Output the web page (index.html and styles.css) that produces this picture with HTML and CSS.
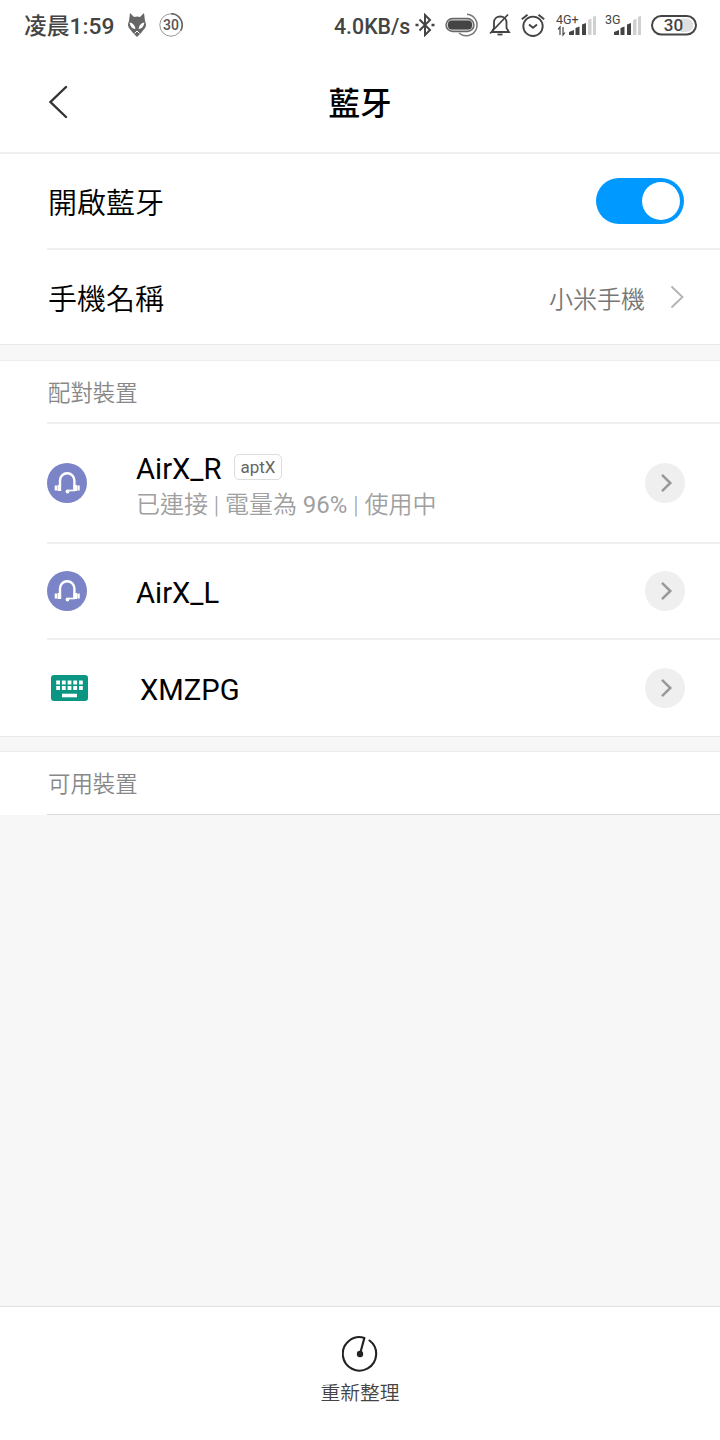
FILE: index.html
```
<!DOCTYPE html>
<html lang="zh-Hant">
  <head>
    <meta charset="UTF-8" />
    <meta name="viewport" content="width=device-width, initial-scale=1.0" />
    <title>藍牙</title>
    <link rel="stylesheet" href="styles.css">
  </head>

  <body>
    <!-- Shared shapes -->
    <svg class="defs" width="0" height="0">
      <symbol id="headset" viewBox="0 0 40 40">
        <circle cx="20" cy="20" r="20" fill="#7b84c6" />
        <path d="M13 28V17.500a7.200 7.200 0 0 1 14.400 0V28" fill="none" stroke="#fff" stroke-width="2.400" />
        <path d="M28 27.500h-7" fill="none" stroke="#fff" stroke-width="1.600" />
        <path d="M10.500 22h3.500v6h-3.500zM26.500 22h3.500v6h-3.500z" fill="#fff" />
        <path d="M8.900 22.500v5M31.500 22.500v5" stroke="#fff" stroke-width="2.400" />
        <circle cx="20.500" cy="28.500" r="1.900" fill="#fff" />
      </symbol>
      <symbol id="more" viewBox="0 0 40 40">
        <circle cx="20" cy="20" r="20" fill="#efefef" />
        <path d="M17 11.800l8.300 8.200-8.300 8.200" fill="none" stroke="#999" stroke-width="2.500" />
      </symbol>
    </svg>

    <!-- Status bar -->
    <div class="status-bar">
      <span class="time">凌晨1:59</span>
      <svg class="fox" width="20" height="24" viewBox="0 0 20 24">
        <path d="M3 0l4 4q3-1 6 0l4-4 1 8q2 4 0 7l-4 5-4 4-4-4-4-5q-2-3 0-7z" fill="#666" />
        <path d="M2.500 9.500q5 .5 6 6.500-5-.5-6-6.500zM17.500 9.500q-5 .5-6 6.500 5-.5 6-6.500z" fill="#fff" />
        <path d="M7.500 20.500l2.500-2.500 2.500 2.500" fill="none" stroke="#fff" stroke-width="1" />
      </svg>
      <svg class="ring" width="24" height="24" viewBox="0 0 24 24">
        <circle cx="12" cy="12" r="11.200" fill="none" stroke="#999" stroke-width="1" />
        <path d="M12 .8a11.200 11.200 0 0 1 9.700 16.800" fill="none" stroke="#666" stroke-width="1.600" />
        <text x="12" y="17.200" class="ring-text">30</text>
      </svg>
      <span class="speed">4.0KB/s</span>
      <svg class="bluetooth" width="20" height="24" viewBox="0 0 20 24" fill="none" stroke="#444" stroke-width="2">
        <path d="M4.500 6.500L15 17l-5 5V2l5 5L4.500 17.500" />
        <path d="M.5 12h3M16.500 12h3" stroke-width="2.600" />
      </svg>
      <svg class="headset-battery" width="34" height="24" viewBox="0 0 34 24" fill="none">
        <path d="M22 1.200a10.800 10.800 0 1 1-8 18.800" stroke="#777" stroke-width="1.500" />
        <rect x="1" y="5.500" width="28" height="13" rx="6.500" fill="#ccc" stroke="#666" stroke-width="1.400" />
        <rect x="3" y="7.500" width="24" height="9" rx="4" fill="#444" />
      </svg>
      <svg class="bell" width="22" height="24" viewBox="0 0 22 24" fill="none" stroke="#444" stroke-width="1.800">
        <path d="M3 19h17l-2.500-4V9.500C17.500 1.500 5 1.500 5 9.500V15z" />
        <path d="M19 1.500L1 20.500" />
        <path d="M8.500 21.500h5" />
      </svg>
      <svg class="alarm" width="24" height="24" viewBox="0 0 24 24" fill="none" stroke="#444" stroke-width="1.900">
        <circle cx="12" cy="13.300" r="9.700" />
        <path d="M.8 6.300l5.700-4.500M23.200 6.300l-5.700-4.500M8 11.500l4 3.200 4-3.200" />
      </svg>
      <svg class="signal" width="42" height="24" viewBox="0 0 42 24">
        <text x="1" y="10.500" class="network">4G+</text>
        <path d="M5 22v-8l-2 2.500M8 14v8l2-2.500" fill="none" stroke="#444" stroke-width="1.200" />
        <path d="M14 22v-3l5-2v5zM20.500 22v-7l4-1.500V22zM27 22V11.500l4-1.500v12z" fill="#444" />
        <path d="M33 22V7l3.500-1.500V22zM38 22V4l3-1.500V22z" fill="#d0d0d0" />
      </svg>
      <svg class="signal second" width="37" height="24" viewBox="0 0 37 24">
        <text x="0" y="10.500" class="network">3G</text>
        <path d="M9 22v-3l5-2v5zM15.500 22v-7l4-1.500V22zM22 22V11.500l4-1.500v12z" fill="#444" />
        <path d="M28 22V7l3.500-1.500V22zM33 22V4l3-1.500V22z" fill="#d0d0d0" />
      </svg>
      <svg class="battery" width="46" height="24" viewBox="0 0 46 24">
        <rect x="1" y="3" width="44" height="18.500" rx="9.250" fill="#fff" stroke="#444" stroke-width="2" />
        <path d="M30 5.500h5.500a6.500 6.500 0 0 1 0 13.500H30z" fill="#e0e0e0" />
        <text x="22.500" y="18.200" class="battery-text">30</text>
      </svg>
    </div>

    <!-- Title bar -->
    <header>
      <svg class="back" width="20" height="34" viewBox="0 0 20 34">
        <path d="M17 2L1.500 17 17 32" fill="none" stroke="#333" stroke-width="2.400" stroke-linecap="round" />
      </svg>
      <h1>藍牙</h1>
    </header>

    <main>
      <section class="settings">
        <div class="row">
          <span class="label">開啟藍牙</span>
          <div class="switch"></div>
        </div>
        <div class="row">
          <span class="label">手機名稱</span>
          <span class="value">小米手機</span>
          <svg class="chevron" width="14" height="24" viewBox="0 0 14 24">
            <path d="M1.500 1.500L12.500 12 1.500 22.500" fill="none" stroke="#b2b2b2" stroke-width="1.800" />
          </svg>
        </div>
      </section>

      <section class="paired">
        <h2>配對裝置</h2>
        <div class="row device connected">
          <svg class="device-icon" width="40" height="40"><use href="#headset" /></svg>
          <div class="info">
            <div class="name">AirX_R <span class="codec">aptX</span></div>
            <div class="state">已連接 | 電量為 <span class="percent">96%</span> | 使用中</div>
          </div>
          <svg class="more" width="40" height="40"><use href="#more" /></svg>
        </div>
        <div class="row device">
          <svg class="device-icon" width="40" height="40"><use href="#headset" /></svg>
          <div class="info">
            <div class="name">AirX_L</div>
          </div>
          <svg class="more" width="40" height="40"><use href="#more" /></svg>
        </div>
        <div class="row device">
          <svg class="device-icon wide" width="44" height="40" viewBox="0 0 44 40">
            <rect x="4" y="7" width="37" height="26" rx="3" fill="#0a9682" />
            <path d="M9.200 14.500h27M9.200 20h27" stroke="#fff" stroke-width="3.800" stroke-dasharray="3.800 1.900" />
            <path d="M15 27.500h15" stroke="#fff" stroke-width="3.600" />
          </svg>
          <div class="info">
            <div class="name">XMZPG</div>
          </div>
          <svg class="more" width="40" height="40"><use href="#more" /></svg>
        </div>
      </section>

      <section class="available">
        <h2>可用裝置</h2>
      </section>
    </main>

    <!-- Refresh -->
    <footer>
      <svg width="36" height="38" viewBox="1 0 36 38">
        <path d="M28.500 5.500A16.700 16.700 0 1 1 23.400 2.900L19 19" fill="none" stroke="#222" stroke-width="2.100" stroke-linecap="round" stroke-linejoin="round" />
        <circle cx="19" cy="19" r="3.200" fill="#222" />
      </svg>
      <span>重新整理</span>
    </footer>
  </body>
</html>
```
FILE: styles.css
```
/* General Styles */
* {
  box-sizing: border-box;
}

body {
  font-family: Roboto, "Noto Sans CJK TC", sans-serif;
  margin: 0;
  height: 1440px;
  background-color: #f7f7f7;
  color: #000;
  display: flex;
  flex-direction: column;
  overflow: hidden;
}

svg {
  display: block;
  flex: none;
}

.defs {
  display: none;
}

/* Status bar */
.status-bar {
  height: 52px;
  background: #fff;
  color: #444;
  display: flex;
  align-items: center;
  padding: 0 23px 2px 24px;
  font-size: 21.300px;
  font-weight: 500;
  white-space: nowrap;
}

.time {
  width: 103px;
  padding-bottom: 2px;
  font-size: 22.800px;
}

.ring {
  margin-left: 12px;
}

.speed {
  width: 81px;
  margin-left: auto;
  padding-top: 2px;
}

.headset-battery {
  margin-left: 10px;
  overflow: visible;
}

.bell {
  margin-left: 10px;
}

.alarm {
  margin-left: 10px;
}

.signal {
  margin-left: 10px;
}

.signal.second {
  margin-left: 8px;
}

.battery {
  margin-left: 9px;
}

.ring-text,
.battery-text {
  font-size: 14px;
  font-weight: 500;
  text-anchor: middle;
  fill: #555;
}

.battery-text {
  font-size: 17px;
  fill: #444;
}

.network {
  font-size: 12.500px;
  font-weight: 400;
  fill: #444;
}

/* Title bar */
header {
  height: 102px;
  background: #fff;
  border-bottom: 2px solid #efefef;
  display: grid;
  grid-template-columns: 1fr auto 1fr;
  align-items: center;
  padding: 0 49px;
}

header h1 {
  margin: 0;
  padding-bottom: 2px;
  font-size: 31.500px;
  font-weight: 500;
}

/* Sections */
section {
  background: #fff;
}

.paired,
.available {
  margin-top: 15px;
  border-top: 1px solid #ececec;
}

.available {
  margin-top: 14px;
}

h2 {
  margin: 0 0 0 47px;
  height: 63px;
  line-height: 64px;
  padding-left: 1px;
  border-bottom: 2px solid #efefef;
  font-size: 22.400px;
  font-weight: 350;
  color: #888;
}

.available h2 {
  border-bottom: 1px solid #ddd;
}

.row {
  margin-left: 47px;
  height: 96px;
  padding-right: 36px;
  border-bottom: 2px solid #efefef;
  display: flex;
  align-items: center;
}

.row:last-child {
  border-bottom: none;
}

.settings,
.paired {
  border-bottom: 1px solid #e8e8e8;
}

.settings .row:last-child {
  height: 94px;
}

.label {
  padding-left: 1px;
  font-size: 29px;
  font-weight: 350;
}

.value {
  margin-left: auto;
  margin-right: 25px;
  font-size: 24px;
  font-weight: 350;
  color: #777;
}

/* Switch */
.switch {
  width: 88px;
  height: 46px;
  margin-left: auto;
  padding: 4px;
  border-radius: 23px;
  background: #0099ff;
  display: flex;
  justify-content: flex-end;
}

.switch::after {
  content: "";
  width: 38px;
  height: 38px;
  border-radius: 50%;
  background: #fff;
}

/* Devices */
.device {
  padding-right: 35px;
}

.device.connected {
  height: 120px;
}

.info {
  margin-left: 49px;
  padding-top: 3px;
  flex: 1;
}

.connected .info {
  padding-top: 7px;
}

.name {
  display: flex;
  align-items: center;
  font-size: 29.200px;
  line-height: 36px;
}

.codec {
  height: 26px;
  margin: -3px 0 0 13px;
  padding: 0 5px;
  border: 1px solid #ddd;
  border-radius: 5px;
  font-size: 17px;
  line-height: 25px;
  color: #666;
}

.state {
  font-size: 24px;
  font-weight: 350;
  line-height: 36px;
  color: #a0a0a0;
}

.percent {
  font-weight: 400;
}

/* Footer */
footer {
  height: 134px;
  margin-top: auto;
  padding-top: 28px;
  background: #fff;
  border-top: 1px solid #e0e0e0;
  display: flex;
  flex-direction: column;
  align-items: center;
  font-size: 19.800px;
  font-weight: 350;
  line-height: 42px;
  color: #444;
}
```
